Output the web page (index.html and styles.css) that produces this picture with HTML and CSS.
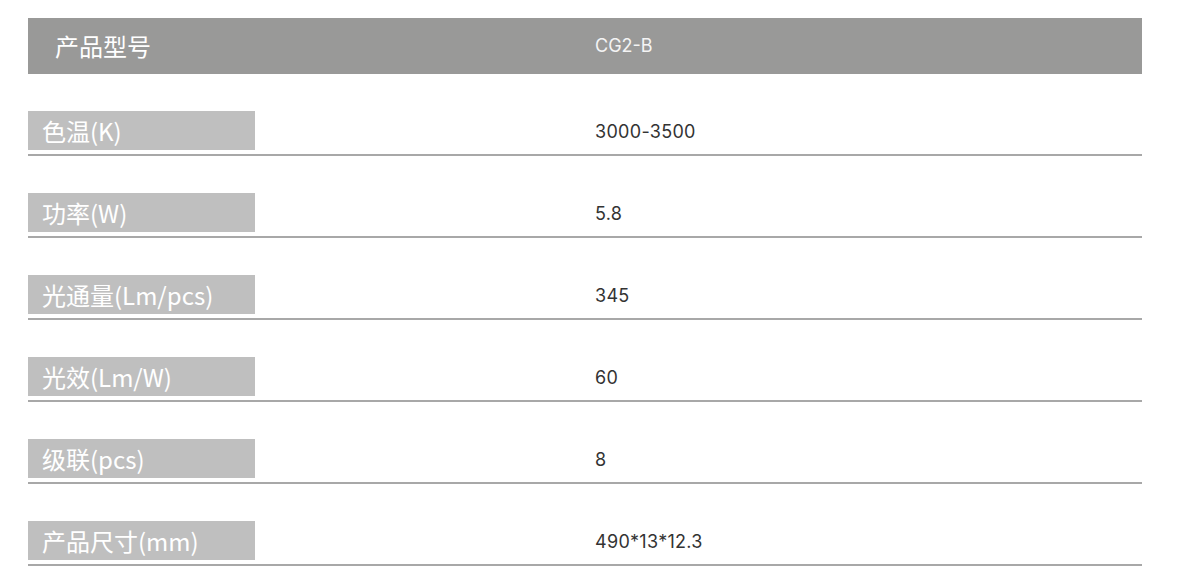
FILE: index.html
```html
<!DOCTYPE html>
<html lang="zh">
<head>
<meta charset="utf-8">
<link rel="stylesheet" href="styles.css">
</head>
<body>
<div class="spec">
  <div class="head">
    <div class="head-label">产品型号</div>
    <div class="head-value">CG2-B</div>
  </div>
  <div class="row"><div class="label">色温(K)</div><div class="value">3000-3500</div></div>
  <div class="row"><div class="label">功率(W)</div><div class="value">5.8</div></div>
  <div class="row"><div class="label">光通量(Lm/pcs)</div><div class="value">345</div></div>
  <div class="row"><div class="label">光效(Lm/W)</div><div class="value">60</div></div>
  <div class="row"><div class="label">级联(pcs)</div><div class="value">8</div></div>
  <div class="row"><div class="label">产品尺寸(mm)</div><div class="value">490*13*12.3</div></div>
</div>
</body>
</html>
```

FILE: styles.css
```css
html, body {
  margin: 0;
  padding: 0;
  background: #ffffff;
}
.spec {
  width: 1114px;
  margin: 18px 0 0 28px;
  font-family: "Noto Sans CJK SC", "Noto Sans", sans-serif;
}
.head {
  height: 56px;
  background: #999998;
  display: flex;
  align-items: center;
}
.head-label {
  width: 567px;
  padding-left: 27px;
  box-sizing: border-box;
  color: #ffffff;
  font-size: 24px;
  line-height: 1;
}
.head-value {
  color: #f4f4f4;
  font-family: "Inter", "Noto Sans", sans-serif;
  font-size: 18px;
  line-height: 1;
}
.row {
  display: flex;
  align-items: center;
  padding-top: 37px;
  padding-bottom: 4px;
  border-bottom: 2px solid #a8a8a8;
}
.label {
  width: 227px;
  height: 39px;
  box-sizing: border-box;
  padding-left: 14px;
  background: #bfbfbf;
  color: #ffffff;
  font-size: 24px;
  line-height: 39px;
  margin-right: 340px;
  white-space: nowrap;
}
.value {
  color: #333333;
  font-family: "Inter", "Noto Sans", sans-serif;
  font-size: 18px;
  letter-spacing: 0.3px;
  line-height: 1;
  padding-top: 2px;
}
```
